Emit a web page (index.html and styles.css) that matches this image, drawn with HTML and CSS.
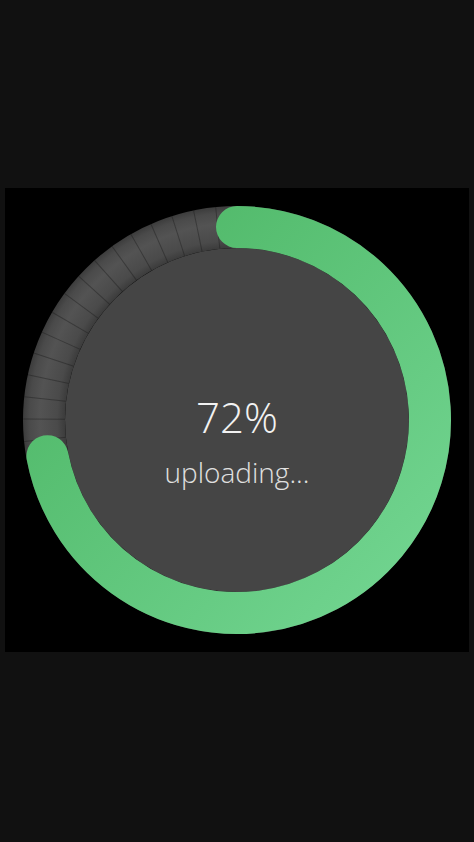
FILE: index.html
```html
<!DOCTYPE html>
<html>
<head>
<meta charset="utf-8">
<link rel="stylesheet" href="styles.css">
</head>
<body>
<div class="panel">
  <div class="gauge">
    <svg class="ring" width="464" height="464" viewBox="0 0 464 464">
      <defs>
        <radialGradient id="trackGrad" gradientUnits="userSpaceOnUse" cx="232" cy="232" r="214">
          <stop offset="0.80" stop-color="#3a3a3a"/>
          <stop offset="0.84" stop-color="#4a4a4a"/>
          <stop offset="0.92" stop-color="#535353"/>
          <stop offset="0.97" stop-color="#4a4a4a"/>
          <stop offset="1" stop-color="#3c3c3c"/>
        </radialGradient>
        <linearGradient id="greenGrad" gradientUnits="userSpaceOnUse" x1="40" y1="60" x2="420" y2="420">
          <stop offset="0" stop-color="#4cb564"/>
          <stop offset="1" stop-color="#73d692"/>
        </linearGradient>
      </defs>
      <circle cx="232" cy="232" r="193" fill="none" stroke="url(#trackGrad)" stroke-width="42"/>
      <circle cx="232" cy="232" r="193" fill="none" stroke="rgba(25,25,25,0.4)" stroke-width="42" stroke-dasharray="1 19.21" transform="rotate(-90 232 232)"/>
      <circle cx="232" cy="232" r="172" fill="#454545"/>
      <path d="M 232 39 A 193 193 0 1 1 42.42 268.16" fill="none" stroke="url(#greenGrad)" stroke-width="42" stroke-linecap="round"/>
    </svg>
    <div class="label">
      <div class="pct">72%</div>
      <div class="status">uploading...</div>
    </div>
  </div>
</div>
</body>
</html>
```

FILE: styles.css
```css
html, body {
  margin: 0;
  padding: 0;
  background: #111111;
}
body {
  width: 474px;
  height: 842px;
  padding-top: 188px;
  padding-left: 5px;
  box-sizing: border-box;
  font-family: "Open Sans", "DejaVu Sans", sans-serif;
}
.panel {
  width: 464px;
  height: 464px;
  background: #000000;
}
.gauge {
  position: relative;
  width: 464px;
  height: 464px;
}
.ring {
  display: block;
}
.label {
  position: absolute;
  inset: 0;
  display: flex;
  flex-direction: column;
  align-items: center;
  justify-content: center;
  padding-top: 44px;
}
.pct {
  font-size: 42px;
  font-weight: 300;
  color: #f2f2f2;
  line-height: 50px;
}
.status {
  font-size: 28px;
  font-weight: 300;
  color: #e0e0e0;
  line-height: 40px;
  margin-top: 10px;
}
```
